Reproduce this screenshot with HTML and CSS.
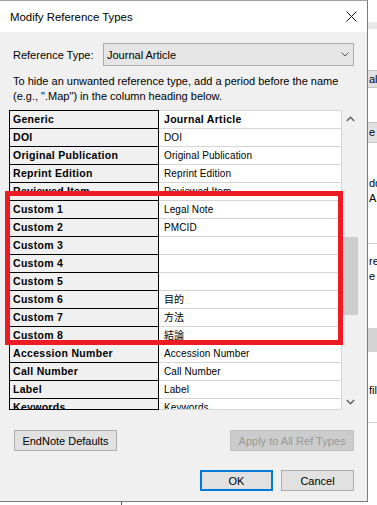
FILE: index.html
```html
<!doctype html>
<html>
<head>
<meta charset="utf-8">
<title>Modify Reference Types</title>
<link rel="stylesheet" href="styles.css">
</head>
<body>
<div class="screen">
  <div class="front">
    <div class="dialog">
      <div class="titlebar">
        <span class="title">Modify Reference Types</span>
        <svg class="close" width="11" height="11" viewBox="0 0 11 11"><path d="M0.5 0.5L10.5 10.5M10.5 0.5L0.5 10.5" stroke="#111" stroke-width="1" fill="none"/></svg>
      </div>

      <div class="body">
        <div class="typerow">
          <label>Reference Type:</label>
          <div class="select">
            <span>Journal Article</span>
            <svg width="8" height="5" viewBox="0 0 8 5"><path d="M0.5 0.5L4 4L7.5 0.5" stroke="#555" stroke-width="1" fill="none"/></svg>
          </div>
        </div>

        <p class="hint">To hide an unwanted reference type, add a period before the name<br>(e.g., ".Map") in the column heading below.</p>

        <div class="fields">
          <div class="viewport">
            <div class="grid">
              <div class="name top">Generic</div><div class="value top head">Journal Article</div>
              <div class="name">DOI</div><div class="value">DOI</div>
              <div class="name">Original Publication</div><div class="value">Original Publication</div>
              <div class="name">Reprint Edition</div><div class="value">Reprint Edition</div>
              <div class="name">Reviewed Item</div><div class="value">Reviewed Item</div>
              <div class="name">Custom 1</div><div class="value">Legal Note</div>
              <div class="name">Custom 2</div><div class="value">PMCID</div>
              <div class="name">Custom 3</div><div class="value"></div>
              <div class="name">Custom 4</div><div class="value"></div>
              <div class="name">Custom 5</div><div class="value"></div>
              <div class="name">Custom 6</div><div class="value">目的</div>
              <div class="name">Custom 7</div><div class="value">方法</div>
              <div class="name">Custom 8</div><div class="value">結論</div>
              <div class="name">Accession Number</div><div class="value">Accession Number</div>
              <div class="name">Call Number</div><div class="value">Call Number</div>
              <div class="name">Label</div><div class="value">Label</div>
              <div class="name">Keywords</div><div class="value">Keywords</div>
            </div>
          </div>
          <div class="scrollbar">
            <div class="arrow"><svg width="9" height="6" viewBox="0 0 9 6"><path d="M0.8 5L4.5 1.3L8.2 5" stroke="#606060" stroke-width="1.4" fill="none"/></svg></div>
            <div class="track"><div class="thumb"></div></div>
            <div class="arrow"><svg width="9" height="6" viewBox="0 0 9 6"><path d="M0.8 1L4.5 4.7L8.2 1" stroke="#606060" stroke-width="1.4" fill="none"/></svg></div>
          </div>
          <div class="mark"></div>
        </div>

        <div class="btnrow">
          <button class="btn defaults">EndNote Defaults</button>
          <button class="btn apply" disabled>Apply to All Ref Types</button>
        </div>
        <div class="btnrow end">
          <button class="btn ok">OK</button>
          <button class="btn cancel">Cancel</button>
        </div>
      </div>
    </div>
    <div class="under"></div>
  </div>

  <div class="behind">
    <div class="band"></div>
    <div class="tab t1">al</div>
    <div class="tab t2">e</div>
    <div class="lines l1">dd<br>A</div>
    <div class="rule r1"></div>
    <div class="lines l2">re<br>e w</div>
    <div class="bar"></div>
    <div class="lines l3">fil</div>
    <div class="rule r2"></div>
  </div>
</div>
</body>
</html>
```

FILE: styles.css
```css
body{
	margin:0;
	background:#fff;
	font-family:"Liberation Sans", Arial, "Noto Sans CJK JP", sans-serif;
	font-size:11px;
	color:#000;
}
.screen{
	display:flex;
	width:377px;
	height:505px;
	overflow:hidden;
}
.front{width:368px; flex:none;}

/* dialog window */
.dialog{
	height:502px;
	box-sizing:border-box;
	background:#f0f0f0;
	border-top:1px solid #a0a0a0;
	border-right:1px solid #7a7a7a;
	border-bottom:1px solid #7a7a7a;
}
.titlebar{
	height:31px;
	background:#fff;
	display:flex;
	align-items:center;
	padding-left:10px;
}
.title{font-size:11.4px;}
.close{margin-left:auto; margin-right:10px;}

.body{padding:11px 8px 10px 9px;}

.typerow{
	display:flex;
	align-items:center;
	height:23px;
	margin:0 5px 0 4px;
}
.typerow label{width:90px; flex:none;}
.select{
	flex:1;
	height:23px;
	box-sizing:border-box;
	border:1px solid #adadad;
	background:#e5e5e5;
	display:flex;
	align-items:center;
	padding:0 4px 0 3px;
}
.select svg{margin-left:auto;}

.hint{margin:8px 0 0 4px; line-height:15px;}

/* field table */
.fields{
	position:relative;
	display:flex;
	margin-top:6px;
	height:300px;
}
.viewport{
	width:333px;
	height:300px;
	box-sizing:border-box;
	overflow:hidden;
	border-bottom:1px solid #000;
	border-image:linear-gradient(90deg,#000 150px,#d5d5d5 150px) 1;
}
.grid{
	display:grid;
	grid-template-columns:150px 183px;
	grid-template-rows:19px;
	grid-auto-rows:18px;
}
.grid div{
	box-sizing:border-box;
	line-height:17px;
	white-space:nowrap;
	overflow:hidden;
}
.name{
	background:#f0f0f0;
	border-left:1px solid #000;
	border-right:1px solid #000;
	border-bottom:1px solid #000;
	padding-left:3px;
	font-weight:bold;
	font-size:10.5px;
	letter-spacing:.3px;
}
.value{
	background:#fff;
	border-right:1px solid #d5d5d5;
	border-bottom:1px solid #d5d5d5;
	padding-left:5px;
	font-size:10px;
	letter-spacing:.1px;
}
.name.top{border-top:1px solid #000;}
.value.top{border-top:1px solid #d5d5d5;}
.value.head{font-weight:bold; font-size:10.5px; letter-spacing:.3px;}

.scrollbar{
	width:17px;
	display:flex;
	flex-direction:column;
}
.arrow{
	height:17px;
	display:flex;
	align-items:center;
	justify-content:center;
}
.track{flex:1;}
.thumb{
	margin:110px 0 0 1px;
	width:15px;
	height:78px;
	background:#cdcdcd;
}

/* red annotation drawn over the list */
.mark{
	position:absolute;
	left:-4px;
	top:81px;
	width:338px;
	height:154px;
	box-sizing:border-box;
	border:5px solid #ed1c24;
}

/* buttons */
.btnrow{
	display:flex;
	justify-content:space-between;
	margin:20px 5px 0 5px;
}
.btnrow.end{justify-content:flex-end; gap:8px; margin-top:19px;}
.btn{
	height:21px;
	box-sizing:border-box;
	border:1px solid #adadad;
	background:#e1e1e1;
	font:inherit;
	color:#000;
	padding:0;
}
.defaults{width:103px;}
.apply{width:124px; background:#cccccc; border-color:#bfbfbf; color:#999;}
.ok{width:73px; border:2px solid #0078d7;}
.cancel{width:73px;}

.under{margin-left:121px; width:1px; height:3px; background:#555;}

/* window behind the dialog */
.behind{
	flex:1;
	overflow:hidden;
	white-space:nowrap;
	line-height:15px;
}
.band{margin-top:22px; height:7px; background:#e9e9e9;}
.tab{background:#e1e1e1; border-top:1px solid #c4c4c4; border-bottom:1px solid #c4c4c4; box-sizing:border-box; padding-left:1px;}
.t1{margin-top:41px; height:18px; line-height:16px;}
.t2{margin-top:34px; height:21px; line-height:19px;}
.lines{padding-left:1px;}
.l1{margin-top:33px;}
.rule{height:1px; background:#cfcfcf;}
.r1{margin-top:37px;}
.l2{margin-top:10px;}
.bar{margin-top:44px; height:24px; background:#d4d4d4;}
.l3{margin-top:31px;}
.r2{margin-top:24px;}
```
